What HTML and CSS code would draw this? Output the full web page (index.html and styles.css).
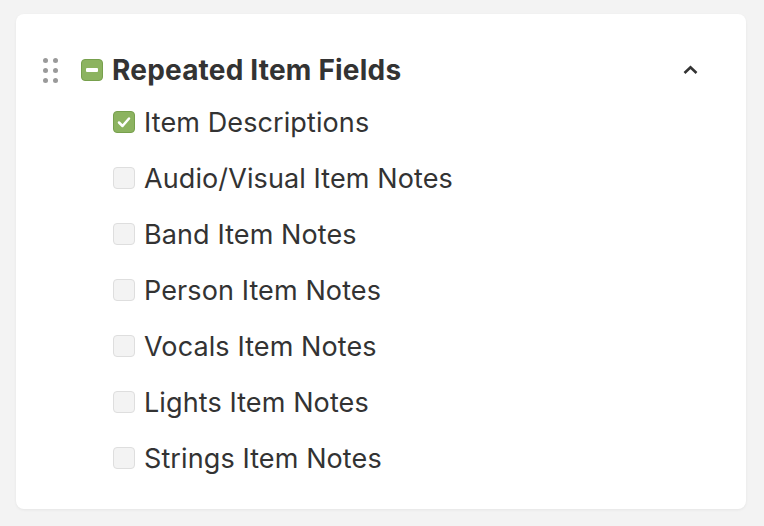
FILE: index.html
```html
<!DOCTYPE html>
<html lang="en">
<head>
    <meta charset="UTF-8">
    <meta name="viewport" content="width=device-width, initial-scale=1.0">
    <title>Repeated Item Fields</title>
    <link rel="stylesheet" href="styles.css">
</head>
<body>
    <div class="card">
        <div class="group-header">
            <span class="handle">
                <i></i><i></i><i></i><i></i><i></i><i></i>
            </span>
            <span class="box box-partial"><span class="dash"></span></span>
            <span class="group-title">Repeated Item Fields</span>
            <span class="toggle">
                <svg width="15" height="10" viewBox="0 0 15 10"><path d="M1.5 8 L7.5 2.2 L13.5 8" fill="none" stroke="#333" stroke-width="2.6"/></svg>
            </span>
        </div>
        <ul class="fields">
            <li><span class="box box-checked"><svg width="16" height="16" viewBox="0 0 16 16"><path d="M3 8.5 L6.5 12 L13 4.5" fill="none" stroke="#fff" stroke-width="2.5" stroke-linecap="round" stroke-linejoin="round"/></svg></span>Item Descriptions</li>
            <li><span class="box"></span>Audio/Visual Item Notes</li>
            <li><span class="box"></span>Band Item Notes</li>
            <li><span class="box"></span>Person Item Notes</li>
            <li><span class="box"></span>Vocals Item Notes</li>
            <li><span class="box"></span>Lights Item Notes</li>
            <li><span class="box"></span>Strings Item Notes</li>
        </ul>
    </div>
</body>
</html>
```

FILE: styles.css
```css
body {
    margin: 0;
    padding: 14px 18px 17px 16px;
    background-color: #f3f3f3;
    font-family: Inter, "Noto Sans", sans-serif;
    color: #333;
}
.card {
    background-color: #fff;
    border-radius: 8px;
    box-shadow: 0 1px 3px rgba(0, 0, 0, 0.06);
    padding: 44px 0 27px 0;
    height: 495px;
    box-sizing: border-box;
}
.group-header {
    display: flex;
    align-items: center;
    height: 24px;
    padding-left: 27px;
    padding-right: 48px;
}
.handle {
    display: grid;
    grid-template-columns: 5px 5px;
    column-gap: 5px;
    row-gap: 5px;
    margin-right: 23px;
}
.handle i {
    display: block;
    width: 5px;
    height: 5px;
    border-radius: 50%;
    background-color: #9a9a9a;
}
.box {
    flex: none;
    width: 22px;
    height: 22px;
    box-sizing: border-box;
    border-radius: 4px;
    border: 1px solid #dedede;
    background-color: #f3f3f3;
    display: flex;
    align-items: center;
    justify-content: center;
    margin-right: 9px;
}
.box-partial,
.box-checked {
    background-color: #8cb360;
    border-color: #77a04d;
}
.dash {
    width: 12px;
    height: 4px;
    background-color: #fff;
    border-radius: 1px;
}
.group-title {
    font-size: 28px;
    font-weight: 700;
    flex: 1;
    letter-spacing: 0.2px;
}
.toggle {
    display: flex;
    align-items: center;
}
.fields {
    list-style: none;
    margin: 12px 0 0 0;
    padding: 0 0 0 97px;
}
.fields li {
    display: flex;
    align-items: center;
    height: 56px;
    font-size: 27px;
    letter-spacing: 0.1px;
}
```
